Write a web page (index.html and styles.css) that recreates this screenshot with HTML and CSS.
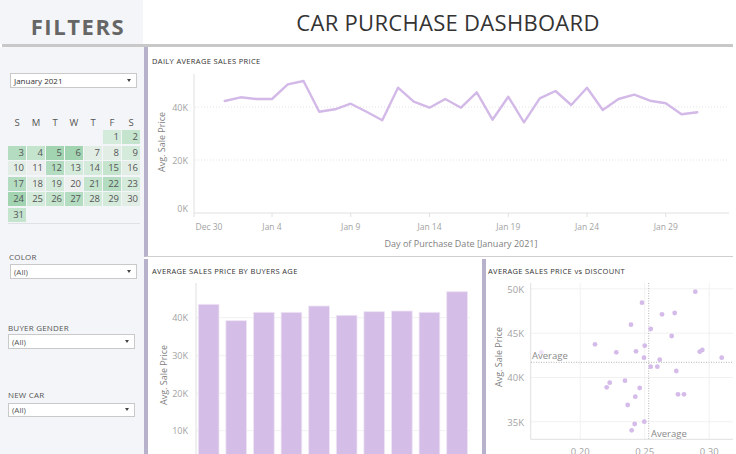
FILE: index.html
```html
<!DOCTYPE html>
<html>
<head>
<meta charset="utf-8">
<link rel="stylesheet" href="styles.css">
</head>
<body>
<div class="dash">
  <header class="top">
    <div class="filters-head">FILTERS</div>
    <h1 class="title">CAR PURCHASE DASHBOARD</h1>
  </header>
  <div class="rule"></div>
  <div class="main">
    <aside class="sidebar">
      <div class="select month-select"><span>January 2021</span><i class="caret"></i></div>
      <div class="cal">
        <div class="cal-head">
          <span>S</span><span>M</span><span>T</span><span>W</span><span>T</span><span>F</span><span>S</span>
        </div>
        <div class="cal-grid">
          <div class="blank"></div><div class="blank"></div><div class="blank"></div><div class="blank"></div><div class="blank"></div>
          <div class="g2">1</div><div class="g3">2</div>
          <div class="g4">3</div><div class="g3">4</div><div class="g5">5</div><div class="g5">6</div><div class="g1">7</div><div class="g1">8</div><div class="g2">9</div>
          <div class="g1">10</div><div class="g0">11</div><div class="g4">12</div><div class="g2">13</div><div class="g2">14</div><div class="g3">15</div><div class="g1">16</div>
          <div class="g4">17</div><div class="g1">18</div><div class="g2">19</div><div class="g0">20</div><div class="g3">21</div><div class="g4">22</div><div class="g2">23</div>
          <div class="g5">24</div><div class="g2">25</div><div class="g3">26</div><div class="g4">27</div><div class="g2">28</div><div class="g2">29</div><div class="g1">30</div>
          <div class="g3">31</div>
        </div>
      </div>
      <div class="filter f-color">
        <div class="flabel">COLOR</div>
        <div class="select"><span>(All)</span><i class="caret"></i></div>
      </div>
      <div class="filter f-gender">
        <div class="flabel">BUYER GENDER</div>
        <div class="select"><span>(All)</span><i class="caret"></i></div>
      </div>
      <div class="filter f-new">
        <div class="flabel">NEW CAR</div>
        <div class="select"><span>(All)</span><i class="caret"></i></div>
      </div>
    </aside>
    <div class="panels">
      <section class="panel panel-line">
        <div class="ptitle">DAILY AVERAGE SALES PRICE</div>
        <svg class="chart" width="585" height="190" viewBox="148 66 585 190">
          <line class="axis" x1="194" y1="74" x2="194" y2="213"/>
          <line class="axis" x1="194" y1="213" x2="729" y2="213"/>
          <line class="grid-dot" x1="195" y1="107" x2="729" y2="107"/>
          <line class="grid-dot" x1="195" y1="160" x2="729" y2="160"/>
          <g class="tick">
            <line x1="194" y1="213" x2="194" y2="217"/>
            <line x1="272" y1="213" x2="272" y2="217"/>
            <line x1="350.75" y1="213" x2="350.75" y2="217"/>
            <line x1="429.5" y1="213" x2="429.5" y2="217"/>
            <line x1="508.25" y1="213" x2="508.25" y2="217"/>
            <line x1="587" y1="213" x2="587" y2="217"/>
            <line x1="665.75" y1="213" x2="665.75" y2="217"/>
          </g>
          <g class="ylab">
            <text x="188" y="110.5">40K</text>
            <text x="188" y="163.5">20K</text>
            <text x="188" y="211.5">0K</text>
          </g>
          <g class="xlab">
            <text x="209" y="229.5">Dec 30</text>
            <text x="272" y="229.5">Jan 4</text>
            <text x="350.75" y="229.5">Jan 9</text>
            <text x="429.5" y="229.5">Jan 14</text>
            <text x="508.25" y="229.5">Jan 19</text>
            <text x="587" y="229.5">Jan 24</text>
            <text x="665.75" y="229.5">Jan 29</text>
          </g>
          <text class="atitle" transform="translate(164.5,142) rotate(-90)">Avg. Sale Price</text>
          <text class="atitle" x="461" y="247">Day of Purchase Date [January 2021]</text>
          <polyline class="line" points="224.75,101 240.5,97.3 256.25,99 272,99 287.75,84.3 303.5,81 319.25,111.7 335,109.3 350.75,103.7 366.5,111.7 382.25,120.3 398,87.7 413.75,101.7 429.5,107.7 445.25,99 461,107.7 476.75,92.3 492.5,119.7 508.25,96.7 524,122.3 539.75,98.3 555.5,91 571.25,105 587,87.7 602.75,110 618.5,99 634.25,94.7 650,100.7 665.75,103.3 681.5,114.3 697.25,112.3"/>
        </svg>
      </section>
      <div class="bottom">
        <section class="panel panel-bar">
          <div class="ptitle">AVERAGE SALES PRICE BY BUYERS AGE</div>
          <svg class="chart" width="334" height="178" viewBox="148 276 334 178">
            <line class="grid" x1="196" y1="317.7" x2="470" y2="317.7"/>
            <line class="grid" x1="196" y1="355.7" x2="470" y2="355.7"/>
            <line class="grid" x1="196" y1="393.3" x2="470" y2="393.3"/>
            <line class="grid" x1="196" y1="430.7" x2="470" y2="430.7"/>
            <line class="axis" x1="196" y1="283" x2="196" y2="454"/>
            <g class="ylab">
              <text x="188" y="321">40K</text>
              <text x="188" y="359">30K</text>
              <text x="188" y="396.5">20K</text>
              <text x="188" y="434">10K</text>
            </g>
            <text class="atitle" transform="translate(166.5,375) rotate(-90)">Avg. Sale Price</text>
            <g class="bars">
              <rect x="198.3" y="304.3" width="20.7" height="160"/>
              <rect x="225.9" y="320.7" width="20.7" height="160"/>
              <rect x="253.5" y="312.3" width="20.7" height="160"/>
              <rect x="281.1" y="312.3" width="20.7" height="160"/>
              <rect x="308.7" y="306" width="20.7" height="160"/>
              <rect x="336.3" y="315.3" width="20.7" height="160"/>
              <rect x="363.9" y="311.7" width="20.7" height="160"/>
              <rect x="391.5" y="311" width="20.7" height="160"/>
              <rect x="419.1" y="312.3" width="20.7" height="160"/>
              <rect x="446.7" y="291.7" width="20.7" height="170"/>
            </g>
          </svg>
        </section>
        <section class="panel panel-scatter">
          <div class="ptitle">AVERAGE SALES PRICE vs DISCOUNT</div>
          <svg class="chart" width="247" height="178" viewBox="486 276 247 178">
            <line class="grid" x1="531" y1="288.9" x2="733" y2="288.9"/>
            <line class="grid" x1="531" y1="333.2" x2="733" y2="333.2"/>
            <line class="grid" x1="531" y1="377.5" x2="733" y2="377.5"/>
            <line class="grid" x1="531" y1="421.8" x2="733" y2="421.8"/>
            <line class="grid" x1="580.2" y1="283" x2="580.2" y2="439"/>
            <line class="grid" x1="644.7" y1="283" x2="644.7" y2="439"/>
            <line class="grid" x1="709.2" y1="283" x2="709.2" y2="439"/>
            <line class="axis" x1="530.7" y1="283" x2="530.7" y2="439.3"/>
            <line class="axis" x1="530.7" y1="439.3" x2="733" y2="439.3"/>
            <g class="ylab big">
              <text x="524" y="292.5">50K</text>
              <text x="524" y="336.5">45K</text>
              <text x="524" y="381">40K</text>
              <text x="524" y="425.5">35K</text>
            </g>
            <g class="xlab big">
              <text x="580.2" y="454.5">0.20</text>
              <text x="644.7" y="454.5">0.25</text>
              <text x="709.2" y="454.5">0.30</text>
            </g>
            <text class="atitle" transform="translate(501.5,357) rotate(-90)">Avg. Sale Price</text>
            <line class="ref" x1="531" y1="362.3" x2="733" y2="362.3"/>
            <line class="ref" x1="648.7" y1="283" x2="648.7" y2="439"/>
            <g class="dots">
              <circle class="faint" cx="541.3" cy="352.3" r="2.4"/>
              <circle cx="695.3" cy="291.7" r="2.4"/>
              <circle cx="642" cy="302.7" r="2.4"/>
              <circle cx="662" cy="314.3" r="2.4"/>
              <circle cx="674.7" cy="313" r="2.4"/>
              <circle cx="631" cy="324.7" r="2.4"/>
              <circle cx="650.7" cy="329" r="2.4"/>
              <circle cx="671.7" cy="336" r="2.4"/>
              <circle cx="595" cy="344.3" r="2.4"/>
              <circle cx="644.7" cy="345.7" r="2.4"/>
              <circle cx="616.3" cy="352.3" r="2.4"/>
              <circle cx="636" cy="351.3" r="2.4"/>
              <circle cx="699.7" cy="351.7" r="2.4"/>
              <circle cx="702.3" cy="350" r="2.4"/>
              <circle cx="644" cy="357.7" r="2.4"/>
              <circle cx="659.7" cy="359.7" r="2.4"/>
              <circle cx="721.7" cy="357.7" r="2.4"/>
              <circle cx="650.7" cy="366.7" r="2.4"/>
              <circle cx="657.3" cy="366.7" r="2.4"/>
              <circle cx="676.3" cy="371" r="2.4"/>
              <circle cx="625" cy="380.7" r="2.4"/>
              <circle cx="609.7" cy="382.7" r="2.4"/>
              <circle cx="606.7" cy="387.3" r="2.4"/>
              <circle cx="639.7" cy="388" r="2.4"/>
              <circle cx="678" cy="394.3" r="2.4"/>
              <circle cx="684" cy="394.3" r="2.4"/>
              <circle cx="635.3" cy="396.7" r="2.4"/>
              <circle cx="627.7" cy="405" r="2.4"/>
              <circle cx="634.7" cy="424" r="2.4"/>
              <circle cx="644.3" cy="421.7" r="2.4"/>
              <circle cx="631.7" cy="430.3" r="2.4"/>
            </g>
            <text class="reflab" x="532" y="359">Average</text>
            <text class="reflab" x="651" y="436.5">Average</text>
          </svg>
        </section>
      </div>
    </div>
  </div>
</div>
</body>
</html>
```

FILE: styles.css
```css
html, body {
  margin: 0;
  padding: 0;
  background: #ffffff;
  height: 454px;
  overflow: hidden;
}
body {
  font-family: "Open Sans", "Noto Sans", "DejaVu Sans", sans-serif;
  color: #333;
}
.dash {
  width: 736px;
  height: 454px;
  display: flex;
  flex-direction: column;
}
.top {
  height: 44px;
  display: flex;
  flex: none;
}
.filters-head {
  width: 143px;
  background: #f4f5f8;
  font-weight: 700;
  font-size: 22px;
  letter-spacing: 1.6px;
  color: #666;
  display: flex;
  align-items: center;
  justify-content: center;
  padding: 8px 0 0 13px;
  box-sizing: border-box;
}
.title {
  flex: 1;
  margin: 0;
  font-weight: 400;
  font-size: 22px;
  color: #333;
  text-align: center;
  line-height: 44px;
  padding-left: 17px;
  padding-top: 0;
  letter-spacing: 0.3px;
}
.rule {
  height: 3px;
  background: #c8c8c8;
  margin: 0 3px 0 2px;
  flex: none;
}
.main {
  flex: 1;
  display: flex;
  min-height: 0;
}
.sidebar {
  width: 144px;
  flex: none;
  background: #f4f5f8;
  display: flex;
  flex-direction: column;
}
.select {
  height: 15px;
  box-sizing: border-box;
  background: #fff;
  border: 1px solid #c9c9c9;
  display: flex;
  align-items: center;
  justify-content: space-between;
  padding: 0 5px 0 3px;
  font-size: 8px;
  color: #555;
}
.month-select {
  margin: 26px 7px 0 10px;
  color: #333;
}
.caret {
  width: 0;
  height: 0;
  border-left: 2.5px solid transparent;
  border-right: 2.5px solid transparent;
  border-top: 3.5px solid #444;
}
.cal {
  margin: 30px 4px 0 8px;
}
.cal-head {
  display: grid;
  grid-template-columns: repeat(7, 18px);
  column-gap: 1px;
  height: 9px;
  line-height: 9px;
  font-size: 9.5px;
  color: #555;
  text-align: center;
  margin-bottom: 3px;
}
.cal-grid {
  display: grid;
  grid-template-columns: repeat(7, 18px);
  grid-auto-rows: 14px;
  column-gap: 1px;
  row-gap: 1.5px;
  font-size: 9.5px;
  color: #555;
  border-bottom: 1px solid #dfe1e4;
  padding-bottom: 1px;
  width: 132px;
}
.cal-grid div {
  text-align: right;
  padding-right: 2px;
  line-height: 14px;
}
.cal-grid .blank { background: transparent; }
.g0 { background: #eeefef; }
.g1 { background: #e2eee5; }
.g2 { background: #d4eadb; }
.g3 { background: #c4e4ce; }
.g4 { background: #b3dcc1; }
.g5 { background: #a2d4b2; }
.filter .flabel {
  font-size: 8px;
  line-height: 10px;
  color: #555;
  letter-spacing: 0.2px;
}
.filter .select { margin-top: 2px; }
.f-color { margin: 28px 7px 0 9px; }
.f-color .select { margin-left: 1px; }
.f-gender { margin: 44px 9px 0 8px; }
.f-gender .select { margin-top: 1px; }
.f-new { margin: 41px 9px 0 8px; }
.f-new .select { margin-top: 3px; height: 14px; }
.panels {
  flex: 1;
  display: grid;
  grid-template-rows: 210px 195px;
  row-gap: 2px;
  margin-right: 3px;
  min-width: 0;
}
.panel {
  border-left: 4px solid #b7b1cb;
  background: #fff;
  display: flex;
  flex-direction: column;
  overflow: hidden;
}
.panel-line {
  border-bottom: 1px solid #cfcfcf;
}
.ptitle {
  font-size: 7.5px;
  line-height: 10px;
  letter-spacing: 0.35px;
  color: #333;
  padding: 9px 0 0 4px;
  height: 19px;
  box-sizing: border-box;
  white-space: nowrap;
  flex: none;
}
.bottom {
  display: grid;
  grid-template-columns: 338px 1fr;
  min-height: 0;
}
.bottom .ptitle {
  padding-top: 7px;
  height: 17px;
}
.panel-scatter .ptitle { padding-left: 2px; }
.chart {
  display: block;
  flex: none;
  overflow: hidden;
}
.chart text {
  font-family: "Open Sans", "Noto Sans", sans-serif;
}
.axis { stroke: #e0e0e0; stroke-width: 1; }
.grid { stroke: #f1f1f1; stroke-width: 1; }
.grid-dot { stroke: #e3e3e3; stroke-width: 1; stroke-dasharray: 1 2; }
.tick line { stroke: #e0e0e0; stroke-width: 1; }
.ylab text { font-size: 9px; fill: #a3a3a3; text-anchor: end; }
.ylab.big text { font-size: 9.5px; }
.xlab text { font-size: 8.5px; fill: #a3a3a3; text-anchor: middle; }
.xlab.big text { font-size: 9.5px; }
.atitle { font-size: 9px; fill: #7f7f7f; text-anchor: middle; }
.line {
  fill: none;
  stroke: #d3b9e7;
  stroke-width: 2.4;
  stroke-linejoin: round;
  stroke-linecap: round;
}
.bars rect { fill: #d4bde6; stroke: #efe6f6; stroke-width: 0.8; }
.ref { stroke: #b5b5b5; stroke-width: 1; stroke-dasharray: 1 1.5; }
.dots circle { fill: #d5bbe9; }
.dots circle.faint { fill: #ece1f5; }
.reflab { font-size: 9.5px; fill: #8a8a8a; }
```
